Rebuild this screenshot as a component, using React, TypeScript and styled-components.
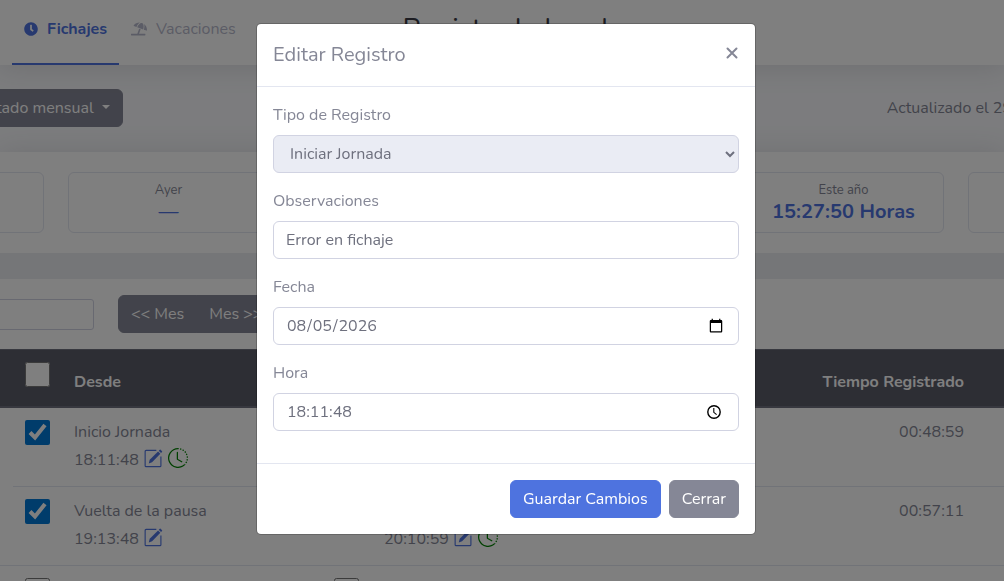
import React from "react";
import styled, { createGlobalStyle } from "styled-components";
import { FaClock, FaUmbrellaBeach } from "react-icons/fa";
import { BsClockHistory } from "react-icons/bs";

const GlobalStyle = createGlobalStyle`
  *, *::before, *::after { box-sizing: border-box; }
  body {
    margin: 0;
    background: #f8f9fc;
    color: #858796;
    font: 400 16px/24px Nunito, Lato, "Open Sans", sans-serif;
  }
  button, input, select { font: inherit; margin: 0; }
`;

const Page = styled.div`
  height: 100vh;
  overflow: hidden;
`;

const shadow = "0 2px 28px rgba(58, 59, 69, 0.15)";

const Header = styled.header`
  display: grid;
  grid-template-columns: 1fr auto 1fr;
  align-items: center;
  height: 65px;
  padding: 0 4px 0 12px;
  background: #fff;
  box-shadow: ${shadow};
  position: relative;
`;

const Tabs = styled.nav`
  display: flex;
  align-self: stretch;
`;

const Tab = styled.a<{ $active?: boolean }>`
  display: flex;
  align-items: center;
  gap: 9px;
  padding: 0 12px 6px;
  border-bottom: 2px solid ${(p) => (p.$active ? "#4e73df" : "transparent")};
  color: ${(p) => (p.$active ? "#4e73df" : "#b7b9cc")};
  font-weight: ${(p) => (p.$active ? 700 : 400)};
  text-decoration: none;
`;

const Title = styled.h1`
  margin: 0;
  padding-bottom: 8px;
  color: #3a3b45;
  font-size: 28px;
  font-weight: 400;
  line-height: 32px;
`;

const Actions = styled.div`
  display: flex;
  justify-content: space-between;
  align-items: center;
  padding: 24px 0;
  margin: 0 -8px 1px -37px;
  white-space: nowrap;
`;

const Button = styled.button<{ $primary?: boolean }>`
  height: 38px;
  padding: 0 12px;
  border: 1px solid ${(p) => (p.$primary ? "#4e73df" : "#858796")};
  border-radius: 6px;
  background: ${(p) => (p.$primary ? "#4e73df" : "#858796")};
  color: #fff;
  white-space: nowrap;
`;

const Caret = styled.span`
  display: inline-block;
  margin-left: 8px;
  vertical-align: 4px;
  border-top: 4px solid;
  border-left: 4px solid transparent;
  border-right: 4px solid transparent;
`;

const Panels = styled.main`
  display: grid;
  grid-template-columns: minmax(0, 1fr);
  gap: 26px;
  background: #ebedf0;
  box-shadow: ${shadow};
`;

const Panel = styled.section`
  background: #fff;
`;

const Stats = styled(Panel)`
  display: flex;
  gap: 24px;
  padding: 20px 0;
  overflow: hidden;
`;

const StatCard = styled.article`
  flex: 0 0 201px;
  height: 61px;
  padding-top: 8px;
  border: 1px solid #e3e6f0;
  border-radius: 6px;
  text-align: center;

  &:first-child { margin-left: -157px; }
`;

const StatLabel = styled.div`
  font-size: 13px;
  line-height: 18px;
`;

const StatValue = styled.div<{ $empty?: boolean }>`
  color: #4e73df;
  font-size: 20px;
  font-weight: ${(p) => (p.$empty ? 400 : 700)};
  line-height: 26px;
`;

const Toolbar = styled.div`
  display: flex;
  align-items: center;
  gap: 24px;
  padding: 16px 0;
`;

const Filter = styled.input`
  width: 134px;
  height: 31px;
  margin-left: -40px;
  border: 1px solid #d1d3e2;
  border-radius: 3px;
  background: #fff;
`;

const ButtonGroup = styled.div`
  display: flex;

  ${Button}:first-child { border-radius: 6px 0 0 6px; }
  ${Button}:last-child { margin-left: -1px; border-radius: 0 6px 6px 0; }
`;

const Table = styled.table`
  width: 100%;
  table-layout: fixed;
  border-collapse: separate;
  border-spacing: 0;
`;

const Col = styled.col<{ $w?: number }>`
  width: ${(p) => (p.$w ? `${p.$w}px` : "auto")};
`;

const Th = styled.th<{ $end?: boolean }>`
  height: 59px;
  padding: 8px 12px 12px;
  border-top: 1px solid #6e707e;
  border-bottom: 2px solid #6e707e;
  background: #5a5c69;
  color: #fff;
  vertical-align: bottom;
  text-align: ${(p) => (p.$end ? "right" : "left")};
  white-space: nowrap;
`;

const Td = styled.td<{ $end?: boolean }>`
  height: 79px;
  padding: 12px 12px 8px;
  border-bottom: 1px solid #e3e6f0;
  vertical-align: top;
  text-align: ${(p) => (p.$end ? "right" : "left")};
`;

const Gutter = styled(Td)`
  padding: 0;
`;

const Check = styled.input`
  display: block;
  width: 25px;
  height: 25px;
  accent-color: #0078d7;

  ${Th} & { margin-bottom: 7px; }
`;

const IconButton = styled.button<{ $color: string }>`
  display: flex;
  padding: 0;
  border: 0;
  background: none;
  color: ${(p) => p.$color};
`;

const Stamp = styled.div`
  display: flex;
  align-items: center;
  gap: 5px;
  height: 32px;

  ${IconButton} { margin-bottom: 4px; }
`;

const Backdrop = styled.div`
  position: fixed;
  inset: 0;
  display: flex;
  justify-content: center;
  align-items: flex-start;
  padding: 23px 0 0 8px;
  background: rgba(0, 0, 0, 0.5);
`;

const Dialog = styled.form`
  width: 500px;
  max-width: 100%;
  border: 1px solid rgba(0, 0, 0, 0.2);
  border-radius: 5px;
  background: #fff;
  background-clip: padding-box;
`;

const DialogHeader = styled.div`
  display: flex;
  justify-content: space-between;
  align-items: center;
  padding: 16px;
  border-bottom: 1px solid #e3e6f0;
`;

const DialogTitle = styled.h2`
  margin: 0;
  font-size: 20px;
  font-weight: 400;
  line-height: 30px;
`;

const CloseButton = styled.button`
  display: flex;
  padding: 2px 1px;
  margin-bottom: 4px;
  border: 0;
  background: none;
  color: #858796;
`;

const DialogBody = styled.div`
  display: grid;
  gap: 16px;
  padding: 16px 16px 32px;
`;

const Field = styled.div`
  display: grid;
  gap: 8px;
`;

const control = `
  width: 100%;
  height: 38px;
  padding: 6px 12px;
  border: 1px solid #d1d3e2;
  border-radius: 6px;
  background: #fff;
  color: #6e707e;
`;

const Input = styled.input`${control}`;

const Select = styled.select`
  ${control}
  &:disabled { background: #eaecf4; opacity: 1; }
`;

const TimeBox = styled.div`
  ${control}
  display: flex;
  align-items: center;
  justify-content: space-between;
  padding: 0 16px 0 13px;
`;

const TimeInput = styled.input`
  flex: 1;
  min-width: 0;
  padding: 0;
  border: 0;
  background: none;
  color: inherit;
`;

const DialogFooter = styled.div`
  display: flex;
  justify-content: flex-end;
  gap: 8px;
  padding: 16px;
  border-top: 1px solid #e3e6f0;
`;

const EditIcon = () => (
  <svg width="19" height="19" viewBox="0 0 20 20" fill="none" stroke="currentColor">
    <path d="M13 1.5H2.2Q1.2 1.5 1.2 2.5V17.5Q1.2 18.5 2.2 18.5H16.8Q17.8 18.5 17.8 17.5V8" strokeWidth="1.2" />
    <path d="M5 15.2L6 11.4L14.8 2.6L17.2 5L8.5 13.9Z" fill="currentColor" stroke="none" />
    <path d="M15.5 1.9L16.6 .8Q17 .4 17.5 .8L19 2.3Q19.4 2.8 19 3.2L17.9 4.3Z" fill="currentColor" stroke="none" />
  </svg>
);

const Edit = () => (
  <IconButton type="button" $color="#4e73df" aria-label="Editar">
    <EditIcon />
  </IconButton>
);

const History = () => (
  <IconButton type="button" $color="#008000" aria-label="Historial">
    <BsClockHistory size={20} />
  </IconButton>
);

const Entry = ({ label, time, history }: { label: string; time: string; history?: boolean }) => (
  <>
    <div>{label || "\u00a0"}</div>
    <Stamp>
      {time}
      <Edit />
      {history && <History />}
    </Stamp>
  </>
);

export default function App() {
  return (
    <>
      <GlobalStyle />
      <Page>
        <Header>
          <Tabs>
            <Tab href="#fichajes" $active>
              <FaClock size={14} /> Fichajes
            </Tab>
            <Tab href="#vacaciones">
              <FaUmbrellaBeach size={16} /> Vacaciones
            </Tab>
          </Tabs>
          <Title>Registro Laboral</Title>
        </Header>

        <Actions>
          <Button type="button">
            Listado mensual
            <Caret />
          </Button>
          <span>Actualizado el 29</span>
        </Actions>

        <Panels>
          <Stats>
            <StatCard />
            <StatCard>
              <StatLabel>Ayer</StatLabel>
              <StatValue $empty>—</StatValue>
            </StatCard>
            <StatCard />
            <StatCard />
            <StatCard>
              <StatLabel>Este año</StatLabel>
              <StatValue>15:27:50 Horas</StatValue>
            </StatCard>
            <StatCard />
          </Stats>

          <Panel>
            <Toolbar>
              <Filter type="text" aria-label="Filtro" />
              <ButtonGroup>
                <Button type="button">&lt;&lt; Mes</Button>
                <Button type="button">Mes &gt;&gt;</Button>
              </ButtonGroup>
            </Toolbar>
            <Table>
              <colgroup>
                <Col $w={13} />
                <Col $w={49} />
                <Col $w={260} />
                <Col $w={50} />
                <Col />
                <Col $w={180} />
                <Col $w={28} />
              </colgroup>
              <thead>
                <tr>
                  <Th />
                  <Th><Check type="checkbox" aria-label="Seleccionar todo" /></Th>
                  <Th>Desde</Th>
                  <Th />
                  <Th />
                  <Th $end>Tiempo Registrado</Th>
                  <Th />
                </tr>
              </thead>
              <tbody>
                <tr>
                  <Gutter rowSpan={2} />
                  <Td><Check type="checkbox" defaultChecked aria-label="Inicio Jornada" /></Td>
                  <Td><Entry label="Inicio Jornada" time="18:11:48" history /></Td>
                  <Td />
                  <Td />
                  <Td $end>00:48:59</Td>
                  <Td />
                </tr>
                <tr>
                  <Td><Check type="checkbox" defaultChecked aria-label="Vuelta de la pausa" /></Td>
                  <Td><Entry label="Vuelta de la pausa" time="19:13:48" /></Td>
                  <Td />
                  <Td><Entry label="" time="20:10:59" history /></Td>
                  <Td $end>00:57:11</Td>
                  <Td />
                </tr>
                <tr>
                  <Gutter />
                  <Td><Check type="checkbox" aria-label="Desde" /></Td>
                  <Td />
                  <Td><Check type="checkbox" aria-label="Hasta" /></Td>
                  <Td />
                  <Td />
                  <Td />
                </tr>
              </tbody>
            </Table>
          </Panel>
        </Panels>
      </Page>

      <Backdrop>
        <Dialog role="dialog" aria-labelledby="dialog-title">
          <DialogHeader>
            <DialogTitle id="dialog-title">Editar Registro</DialogTitle>
            <CloseButton type="button" aria-label="Cerrar ventana">
              <svg width="12" height="12" viewBox="0 0 12 12" stroke="currentColor" strokeWidth="2" strokeLinecap="round">
                <path d="M1.5 1.5L10.5 10.5M10.5 1.5L1.5 10.5" />
              </svg>
            </CloseButton>
          </DialogHeader>
          <DialogBody>
            <Field>
              <label htmlFor="tipo">Tipo de Registro</label>
              <Select id="tipo" disabled>
                <option>Iniciar Jornada</option>
              </Select>
            </Field>
            <Field>
              <label htmlFor="observaciones">Observaciones</label>
              <Input id="observaciones" type="text" defaultValue="Error en fichaje" />
            </Field>
            <Field>
              <label htmlFor="fecha">Fecha</label>
              <Input id="fecha" type="date" defaultValue="2026-08-05" />
            </Field>
            <Field>
              <label htmlFor="hora">Hora</label>
              <TimeBox>
                <TimeInput id="hora" type="text" defaultValue="18:11:48" />
                <IconButton type="button" $color="#000" aria-label="Elegir hora">
                  <svg width="16" height="16" viewBox="0 0 16 16" fill="none" stroke="currentColor">
                    <circle cx="8" cy="8" r="6.2" strokeWidth="1.4" />
                    <path d="M7.8 4V8.3L10.6 10.6" strokeWidth="1.1" />
                  </svg>
                </IconButton>
              </TimeBox>
            </Field>
          </DialogBody>
          <DialogFooter>
            <Button type="submit" $primary>Guardar Cambios</Button>
            <Button type="button">Cerrar</Button>
          </DialogFooter>
        </Dialog>
      </Backdrop>
    </>
  );
}
